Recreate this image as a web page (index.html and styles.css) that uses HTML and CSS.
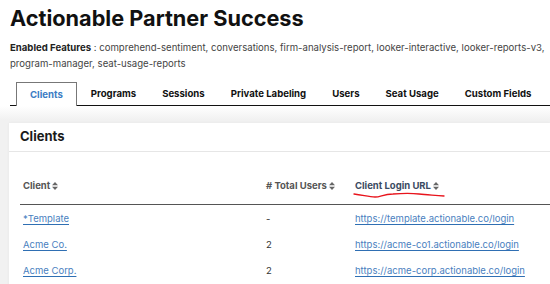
FILE: index.html
```html
<!DOCTYPE html>
<html lang="en">
<head>
    <meta charset="UTF-8">
    <title>Actionable Partner Success</title>
    <link rel="stylesheet" href="styles.css">
</head>
<body>
    <div class="page-head">
        <h1>Actionable Partner Success</h1>
        <p class="features"><b>Enabled Features</b> : comprehend-sentiment, conversations, firm-analysis-report, looker-interactive, looker-reports-v3, program-manager, seat-usage-reports</p>
        <ul class="tabs">
            <li class="tab active">Clients</li>
            <li class="tab">Programs</li>
            <li class="tab">Sessions</li>
            <li class="tab">Private Labeling</li>
            <li class="tab">Users</li>
            <li class="tab">Seat Usage</li>
            <li class="tab">Custom Fields</li>
        </ul>
    </div>

    <div class="content">
        <div class="card">
            <div class="card-header">Clients</div>
            <table class="clients-table">
                <thead>
                    <tr>
                        <th class="col-client">Client <svg class="sort" width="6" height="8" viewBox="0 0 6 8"><path d="M3 0 L6 3.2 H0 Z M3 8 L6 4.8 H0 Z"/></svg></th>
                        <th class="col-users"># Total Users <svg class="sort" width="6" height="8" viewBox="0 0 6 8"><path d="M3 0 L6 3.2 H0 Z M3 8 L6 4.8 H0 Z"/></svg></th>
                        <th class="col-url">
                            <span class="marked">Client Login URL <svg class="sort" width="6" height="8" viewBox="0 0 6 8"><path d="M3 0 L6 3.2 H0 Z M3 8 L6 4.8 H0 Z"/></svg>
                                <svg class="scribble" width="92" height="8" viewBox="0 0 92 8">
                                    <path d="M1 3 C 10 4, 16 6, 22 6 C 28 6, 30 3, 40 3 C 52 2, 58 2, 66 3 C 74 4, 80 4, 91 5" fill="none" stroke="#e8141c" stroke-width="1.3" stroke-linecap="round"/>
                                </svg>
                            </span>
                        </th>
                    </tr>
                </thead>
                <tbody>
                    <tr>
                        <td><a href="#">*Template</a></td>
                        <td>-</td>
                        <td><a href="#">https://template.actionable.co/login</a></td>
                    </tr>
                    <tr>
                        <td><a href="#">Acme Co.</a></td>
                        <td>2</td>
                        <td><a href="#">https://acme-co1.actionable.co/login</a></td>
                    </tr>
                    <tr>
                        <td><a href="#">Acme Corp.</a></td>
                        <td>2</td>
                        <td><a href="#">https://acme-corp.actionable.co/login</a></td>
                    </tr>
                </tbody>
            </table>
        </div>
    </div>
</body>
</html>
```

FILE: styles.css
```css
* {
    margin: 0;
    padding: 0;
    box-sizing: border-box;
}

body {
    font-family: Inter, 'Noto Sans', Arial, sans-serif;
    background: #fff;
    color: #222;
    overflow: hidden;
    height: 284px;
}

.page-head {
    padding: 4px 0 0 10px;
}

.page-head h1 {
    font-size: 21.7px;
    font-weight: 700;
    color: #111;
    line-height: 28px;
}

.features {
    margin-top: 8px;
    font-size: 9.6px;
    line-height: 16px;
    color: #444;
    padding-right: 2px;
}

.features b {
    color: #222;
    font-weight: 700;
}

.tabs {
    list-style: none;
    display: flex;
    margin-top: 10px;
    padding-left: 6px;
    border-bottom: 1.5px solid #111;
    height: 24px;
    white-space: nowrap;
}

.tab {
    flex-shrink: 0;
    font-size: 9.6px;
    font-weight: 700;
    color: #111;
    padding: 6px 0 0;
    margin-right: 26px;
}

.tab:nth-child(2) { margin-left: 14px; }

.tab.active {
    color: #3b7cc4;
    border: 1px solid #777;
    border-bottom: none;
    background: #fff;
    height: 24px;
    margin-right: 0;
    padding: 6px 13px 0;
}

.content {
    background: linear-gradient(#fff 0, #f1f1f1 14px, #f1f1f1 100%);
    padding: 17px 0 0 9px;
    height: 180px;
}

.card {
    background: #fff;
    box-shadow: 0 0 3px rgba(0, 0, 0, 0.05);
    height: 200px;
}

.card-header {
    font-size: 13px;
    font-weight: 700;
    color: #1a1a1a;
    padding: 5px 11px 0;
    height: 29px;
    border-bottom: 1px solid #e6e6e6;
}

.clients-table {
    border-collapse: collapse;
    margin: 0 11px;
    width: 560px;
    font-size: 9.5px;
}

.clients-table th {
    text-align: left;
    font-weight: 700;
    color: #555;
    line-height: 11px;
    padding: 28px 0 13px;
    border-bottom: 1.5px solid #555;
    white-space: nowrap;
}

.col-client { width: 246px; padding-left: 3px !important; }
.col-users { width: 89px; }

.sort {
    fill: #666;
    vertical-align: -0.5px;
}

.marked {
    position: relative;
    color: #3b4b62;
}

.scribble {
    position: absolute;
    left: -2px;
    top: 11px;
}

.clients-table td {
    line-height: 11px;
    padding: 8px 0 7px;
    color: #333;
}

.clients-table td:first-child {
    padding-left: 3px;
}

.clients-table a {
    color: #4a7fc0;
    text-decoration: underline;
    text-decoration-color: #2f6fb3;
    text-underline-offset: 2px;
}
```
